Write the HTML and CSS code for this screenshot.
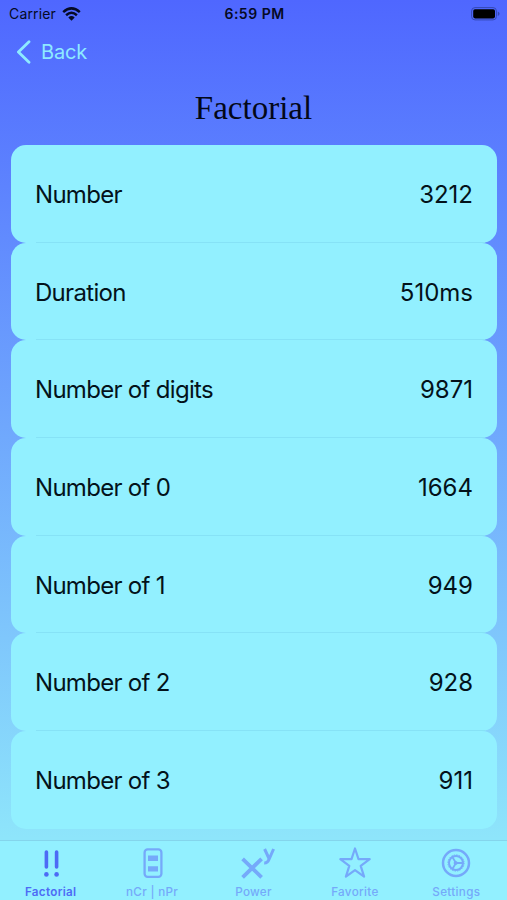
FILE: index.html
```html
<!DOCTYPE html>
<html lang="en">
<head>
<meta charset="utf-8">
<title>Factorial</title>
<link rel="stylesheet" href="styles.css">
</head>
<body>
<div class="app">
  <header class="status">
    <div class="carrier"><span>Carrier</span>
      <svg width="19" height="14" viewBox="0 0 19 14" fill="none" stroke="#050a25" stroke-width="2.5"><path d="M1.2 5.1Q9.5-2.3 17.8 5.1M4.1 8.2Q9.5 3.4 14.9 8.2"/><path d="M6.3 10.5Q9.5 7.7 12.7 10.5L9.5 13.7Z" fill="#050a25" stroke="none"/></svg>
    </div>
    <div class="time">6:59 PM</div>
    <svg class="battery" width="30" height="14" viewBox="0 0 30 14"><rect x="1.6" y=".6" width="24.8" height="12.3" rx="3.4" fill="none" stroke="#3448b4"/><rect x="3.2" y="2.2" width="21.8" height="9.2" rx="1.8" fill="#000"/><path d="M27.8 4.6Q29.6 5.3 29.6 6.8T27.8 9Z" fill="#3448b4"/></svg>
  </header>
  <nav class="back">
    <svg width="15" height="24" viewBox="0 0 15 24" fill="none" stroke="#8eeaff" stroke-width="2.8" stroke-linecap="round" stroke-linejoin="round"><path d="M13 1.8L2.4 12 13 22.2"/></svg>
    <span>Back</span>
  </nav>
  <h1>Factorial</h1>
  <main class="list">
    <div class="row"><span class="label">Number</span><span>3212</span></div>
    <div class="row"><span class="label">Duration</span><span>510ms</span></div>
    <div class="row"><span class="label">Number of digits</span><span>9871</span></div>
    <div class="row"><span class="label">Number of 0</span><span>1664</span></div>
    <div class="row"><span class="label">Number of 1</span><span>949</span></div>
    <div class="row"><span class="label">Number of 2</span><span>928</span></div>
    <div class="row"><span class="label">Number of 3</span><span>911</span></div>
  </main>
  <footer class="tabs">
    <div class="tab active">
      <svg width="36" height="36" viewBox="0 0 36 36" fill="none" stroke="currentColor" stroke-width="3.6" stroke-linecap="round"><path d="M13.4 7v15M23.6 7v15"/><g fill="currentColor" stroke="none"><circle cx="13.4" cy="29.4" r="2.3"/><circle cx="23.6" cy="29.4" r="2.3"/></g></svg>
      <span>Factorial</span>
    </div>
    <div class="tab">
      <svg width="36" height="36" viewBox="0 0 36 36"><rect x="10.6" y="4.4" width="16.8" height="27.4" rx="3" fill="none" stroke="currentColor" stroke-width="2.3"/><path d="M14 10.5h10v5.4h-10zM14 21.2h10v5.4h-10z" fill="currentColor"/></svg>
      <span>nCr | nPr</span>
    </div>
    <div class="tab">
      <svg width="44" height="36" viewBox="0 0 44 36" fill="none" stroke="currentColor"><path d="M11.6 13.8L30.6 32.4M30.6 13.8L11.6 32.4" stroke-width="3.8"/><path d="M33.6 4l4.6 10M42.6 4l-4.4 10q-1.6 4.2-5 4" stroke-width="3"/></svg>
      <span>Power</span>
    </div>
    <div class="tab">
      <svg width="36" height="36" viewBox="0 0 36 36" fill="none" stroke="currentColor" stroke-width="2.2" stroke-linejoin="round"><path d="M18 3.5l3.5 10.6 11.2.1-9 6.7 3.4 10.8-9.1-6.6-9.1 6.6 3.4-10.8-9-6.7 11.2-.1z"/></svg>
      <span>Favorite</span>
    </div>
    <div class="tab">
      <svg width="36" height="36" viewBox="0 0 36 36" fill="none" stroke="currentColor"><circle cx="18" cy="18" r="13" stroke-width="2.5"/><circle cx="18" cy="18" r="7" stroke-width="2"/><circle cx="18" cy="18" r="8.1" stroke-width="1" stroke-dasharray="1.4 1.145"/><path d="M18 18h7M18 18l-3.8-6.2M18 18l-3.8 6.2" stroke-width="1.8"/><circle cx="17.6" cy="18" r="2" fill="currentColor" stroke="none"/></svg>
      <span>Settings</span>
    </div>
  </footer>
</div>
</body>
</html>
```
FILE: styles.css
```css
* { box-sizing: border-box; }
body { margin: 0; font-family: Inter, "Liberation Sans", sans-serif; color: #03121a; }
.app {
  width: 507px; height: 900px; overflow: hidden;
  display: flex; flex-direction: column;
  background: linear-gradient(#4f67ff, #8ee5fb 838px);
}
.status {
  height: 27px; padding: 0 7px 0 9px;
  display: grid; grid-template-columns: 1fr auto 1fr; align-items: center;
  font-size: 14px; color: #050a25;
}
.carrier { display: flex; align-items: center; gap: 6px; letter-spacing: .15px; }
.time { font-weight: 600; letter-spacing: .5px; }
.battery { justify-self: end; }
.back {
  height: 50px; padding-left: 16px;
  display: flex; align-items: center; gap: 10px;
  color: #8eeaff; font-size: 20px; letter-spacing: -.2px;
}
h1 {
  margin: 0; height: 68px; text-align: center;
  font: 400 33px/62px "Liberation Serif", serif; color: #030818;
}
.list { padding: 0 10px 0 11px; flex: 1; }
.row {
  position: relative; height: 97.7px; padding: 1px 24px 0 24px;
  display: flex; align-items: center; justify-content: space-between;
  background: #92f0ff; border-radius: 15px;
  font-size: 24px;
}
.label { letter-spacing: -.7px; }
.row:not(:last-child)::after {
  content: ""; position: absolute; left: 25px; right: 12px; bottom: 0;
  height: 1px; background: #86e2f6;
}
.tabs {
  height: 60px; flex: none; border-top: 1px solid #84d5ec;
  display: grid; grid-template-columns: repeat(5, 1fr);
  background: #92f0ff; color: #75a9fa;
}
.tab { display: flex; flex-direction: column; align-items: center; padding-top: 4px; }
.tab span { font-size: 11.7px; line-height: 14px; margin-top: 4px; font-weight: 500; letter-spacing: .3px; }
.tab.active { color: #4d6bf5; }
.tab.active span { font-weight: 600; }
```
